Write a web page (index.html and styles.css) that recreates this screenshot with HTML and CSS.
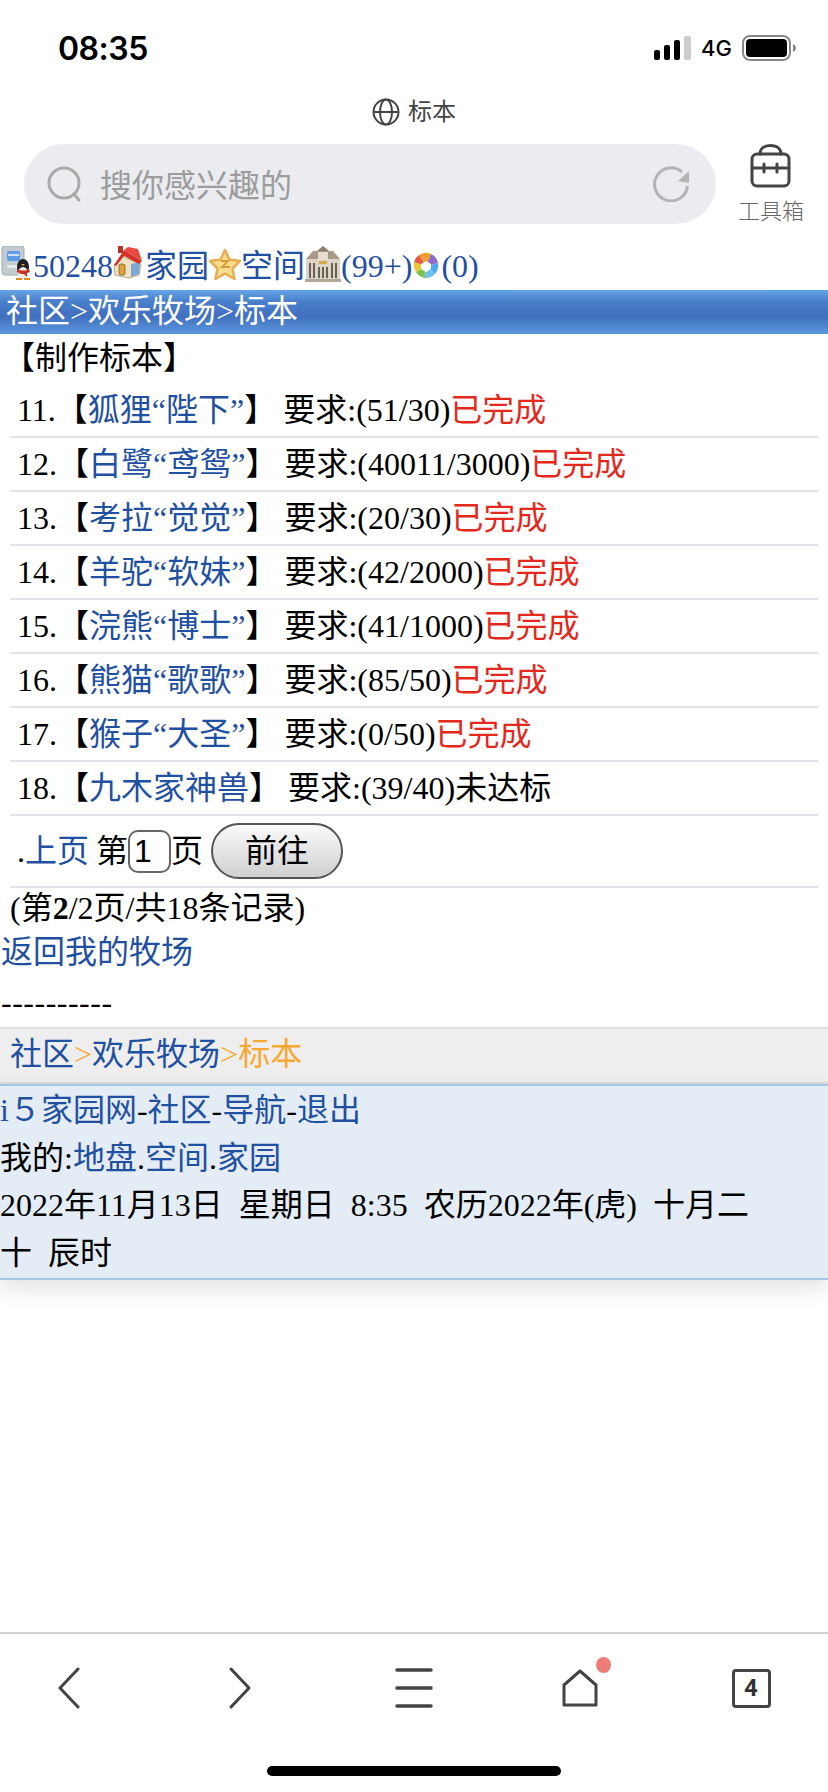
FILE: index.html
```html
<!DOCTYPE html>
<html lang="zh-CN">
<head>
    <meta charset="UTF-8">
    <meta name="viewport" content="width=device-width, initial-scale=1.0">
    <title>标本</title>
    <link rel="stylesheet" href="styles.css">
</head>
<body>
    <header class="browser-top">
        <div class="status-bar">
            <span class="clock">08:35</span>
            <div class="status-right">
                <svg class="signal" viewBox="0 0 37 24">
                    <rect x="0" y="14" width="6" height="10" rx="2" fill="#000"/>
                    <rect x="10" y="9" width="6" height="15" rx="2" fill="#000"/>
                    <rect x="20" y="4" width="6" height="20" rx="2" fill="#000"/>
                    <rect x="30" y="0" width="7" height="24" rx="2" fill="#ccc"/>
                </svg>
                <span class="network">4G</span>
                <svg class="battery" viewBox="0 0 54 26">
                    <rect x="1" y="1" width="47" height="24" rx="7" fill="none" stroke="#888" stroke-width="2"/>
                    <rect x="4" y="4" width="41" height="18" rx="4" fill="#000"/>
                    <path d="M51 9c2 1 3 2.500 3 4s-1 3-3 4z" fill="#888"/>
                </svg>
            </div>
        </div>
        <div class="page-title">
            <svg class="globe" viewBox="0 0 28 28" fill="none" stroke="#444" stroke-width="2">
                <circle cx="14" cy="14" r="12.500"/>
                <ellipse cx="14" cy="14" rx="6" ry="12.500"/>
                <path d="M1.500 14h25"/>
            </svg>
            <span>标本</span>
        </div>
        <div class="search-row">
            <div class="search-box">
                <svg class="search-icon" viewBox="0 0 36 36" fill="none" stroke="#aaa" stroke-width="3" stroke-linecap="round">
                    <circle cx="17" cy="17" r="15"/>
                    <path d="M27 28l5 6"/>
                </svg>
                <span class="search-text">搜你感兴趣的</span>
                <svg class="refresh-icon" viewBox="0 0 36 36" fill="none" stroke="#b4b4b4" stroke-width="3">
                    <path d="M29 6A16.500 16.500 0 1 0 34.500 20"/>
                    <path d="M36 5v12l-11-2z" fill="#b4b4b4" stroke="none"/>
                </svg>
            </div>
            <div class="toolbox">
                <svg class="toolbox-icon" viewBox="0 0 44 44" fill="none" stroke="#444" stroke-width="3" stroke-linecap="round" stroke-linejoin="round">
                    <rect x="3" y="10" width="37" height="32" rx="5"/>
                    <path d="M11 10c0-5 4-8.500 10.500-8.500S32 5 32 10"/>
                    <path d="M3 24h37M15 20v8M28 20v8"/>
                </svg>
                <span>工具箱</span>
            </div>
        </div>
    </header>

    <main>
        <div class="top-links">
            <svg class="pic pic-qq" viewBox="0 0 32 34">
                <rect x="1" y="0" width="22" height="29" rx="3" fill="#c2cbd2" stroke="#a0abb4"/>
                <rect x="6" y="5" width="13" height="10" rx="1" fill="#5f9ce6"/>
                <rect x="7" y="8" width="11" height="2" fill="#cfe2fa"/>
                <rect x="6" y="19" width="10" height="3" fill="#e4eaef"/>
                <ellipse cx="22" cy="21" rx="6" ry="8" fill="#1e1e1e"/>
                <ellipse cx="22" cy="27" rx="5" ry="6" fill="#f2ece2"/>
                <path d="M16 23c3 2 9 2 12 0l1 3-3 1v4l-3-3h-3l-4-2z" fill="#cf2f22"/>
                <path d="M20 18h4l-2 2z" fill="#eba31e"/>
                <path d="M15 33h6M23 33h6" stroke="#e08c1c" stroke-width="2"/>
            </svg><a href="#">50248</a><svg class="pic pic-house" viewBox="0 0 32 34">
                <path d="M1 19l9-8 18 7-2 11-10 3-14-3z" fill="#efe3c3" stroke="#a89768" stroke-width=".8"/>
                <path d="M18 18l9-2-1 12-8 3z" fill="#7ba8d4"/>
                <path d="M1 19L11 4l18 11-3 3-15-8-8 10z" fill="#d6302a"/>
                <path d="M11 4l18 11 -4-12L15 1z" fill="#e84a40"/>
                <rect x="5" y="0" width="5" height="7" fill="#b93026"/>
                <rect x="6" y="18" width="6" height="11" rx="2" fill="#e4a23c" stroke="#7b5d28" stroke-width=".8"/>
            </svg><a href="#">家园</a><svg class="pic pic-star" viewBox="0 0 32 32">
                <path d="M16 2l4.500 9.500L31 13l-7.500 7.500L25.500 31 16 25.500 6.500 31l2-10.500L1 13l10.500-1.500z" fill="#f9dd8c" stroke="#e8ac52" stroke-width="2.500" stroke-linejoin="round"/>
                <path d="M12 13h7l-6 6h8" fill="none" stroke="#d89a38" stroke-width="1.800"/>
            </svg><a href="#">空间</a><svg class="pic pic-bank" viewBox="0 0 36 36">
                <path d="M18 0l6 5H12z" fill="#8d7f6e"/>
                <path d="M8 5h20l7 8H1z" fill="#a89a86"/>
                <rect x="1" y="13" width="34" height="21" fill="#dcd4c4"/>
                <rect x="13" y="6" width="10" height="8" fill="#e6dfd0"/>
                <path d="M5 17v15M9 17v15M14 21v11M18 21v11M22 21v11M27 17v15M31 17v15" stroke="#6a6259" stroke-width="2"/>
                <rect x="0" y="33" width="36" height="3" fill="#b3a896"/>
                <rect x="14" y="15" width="8" height="3" fill="#d6ad4e"/>
            </svg><a href="#">(99+)</a><svg class="pic pic-photo" viewBox="0 0 26 26">
                <path d="M13 13L6 2a12.500 12.500 0 0 1 12-1z" fill="#f0a030"/>
                <path d="M13 13l5-12a12.500 12.500 0 0 1 7 9z" fill="#8e6cc8"/>
                <path d="M13 13l12-3a12.500 12.500 0 0 1-3 11z" fill="#4aa8ec"/>
                <path d="M13 13l9 8a12.500 12.500 0 0 1-10 4z" fill="#6cc0f0"/>
                <path d="M13 13l-1 12a12.500 12.500 0 0 1-9-6z" fill="#7cc050"/>
                <path d="M13 13L3 19A12.500 12.500 0 0 1 1 9z" fill="#e8c838"/>
                <path d="M13 13L1 9a12.500 12.500 0 0 1 5-7z" fill="#e85848"/>
                <path d="M13 8l5 3v5l-5 3-5-3v-5z" fill="#fff"/>
            </svg><a href="#">(0)</a>
        </div>

        <div class="title-bar">社区&gt;欢乐牧场&gt;标本</div>
        <div class="section-head">【制作标本】</div>

        <div class="list">
            <div class="list-row">11.【<a href="#">狐狸“陛下”</a>】 要求:(51/30)<span class="done">已完成</span></div>
            <div class="list-row">12.【<a href="#">白鹭“鸢鸳”</a>】 要求:(40011/3000)<span class="done">已完成</span></div>
            <div class="list-row">13.【<a href="#">考拉“觉觉”</a>】 要求:(20/30)<span class="done">已完成</span></div>
            <div class="list-row">14.【<a href="#">羊驼“软妹”</a>】 要求:(42/2000)<span class="done">已完成</span></div>
            <div class="list-row">15.【<a href="#">浣熊“博士”</a>】 要求:(41/1000)<span class="done">已完成</span></div>
            <div class="list-row">16.【<a href="#">熊猫“歌歌”</a>】 要求:(85/50)<span class="done">已完成</span></div>
            <div class="list-row">17.【<a href="#">猴子“大圣”</a>】 要求:(0/50)<span class="done">已完成</span></div>
            <div class="list-row">18.【<a href="#">九木家神兽</a>】 要求:(39/40)未达标</div>
            <form class="list-row pager">
                <span>.<a href="#">上页</a> 第</span><input class="page-input" type="text" value="1"><span>页</span>
                <button class="go-btn" type="button">前往</button>
            </form>
        </div>

        <div class="page-info">(第<b>2</b>/2页/共18条记录)</div>
        <div class="back-link"><a href="#">返回我的牧场</a></div>
        <div class="dashes">----------</div>

        <div class="crumbs"><a href="#">社区</a><i>&gt;</i><a href="#">欢乐牧场</a><i>&gt;</i><i>标本</i></div>
        <div class="site-foot">
            <div><a href="#">i５家园网</a>-<a href="#">社区</a>-<a href="#">导航</a>-<a href="#">退出</a></div>
            <div>我的:<a href="#">地盘</a>.<a href="#">空间</a>.<a href="#">家园</a></div>
            <div>2022年11月13日&nbsp;&nbsp;星期日&nbsp;&nbsp;8:35&nbsp;&nbsp;农历2022年(虎)&nbsp;&nbsp;十月二<br>十&nbsp;&nbsp;辰时</div>
        </div>
    </main>

    <footer class="browser-bottom">
        <nav class="tool-bar">
            <svg class="tool tool-chevron" viewBox="0 0 24 42" fill="none" stroke="#444" stroke-width="3" stroke-linecap="round" stroke-linejoin="round">
                <path d="M21 2L3 21l18 19"/>
            </svg>
            <svg class="tool tool-chevron" viewBox="0 0 24 42" fill="none" stroke="#444" stroke-width="3" stroke-linecap="round" stroke-linejoin="round">
                <path d="M3 2l18 19L3 40"/>
            </svg>
            <svg class="tool tool-menu" viewBox="0 0 38 40" fill="none" stroke="#444" stroke-width="3.500" stroke-linecap="round">
                <path d="M2 2h34M2 20h34M2 38h34"/>
            </svg>
            <div class="home-wrap">
                <svg class="tool tool-home" viewBox="0 0 36 38" fill="none" stroke="#444" stroke-width="3" stroke-linejoin="round">
                    <path d="M18 2L2 16v20h32V16z"/>
                </svg>
                <span class="home-dot"></span>
            </div>
            <div class="tabs-count">4</div>
        </nav>
        <div class="home-bar"></div>
    </footer>
</body>
</html>
```

FILE: styles.css
```css
body {
    margin: 0;
    width: 828px;
    height: 1792px;
    display: flex;
    flex-direction: column;
    overflow: hidden;
    background-color: #fff;
    color: #000;
    font-family: "Liberation Serif", "Noto Sans CJK SC", serif;
    font-size: 32px;
}
a {
    color: #1f50a2;
    text-decoration: none;
}

/* browser chrome, top */
.browser-top {
    height: 242px;
    font-family: "Noto Sans CJK SC", sans-serif;
}
.status-bar {
    height: 96px;
    padding: 0 32px 0 58px;
    display: flex;
    justify-content: space-between;
    align-items: center;
}
.clock {
    font-family: Inter, sans-serif;
    font-size: 32px;
    font-weight: 600;
    letter-spacing: -0.500px;
}
.status-right {
    display: flex;
    align-items: center;
}
.signal {
    width: 37px;
    height: 24px;
}
.network {
    margin: 0 10px;
    font-family: Inter, sans-serif;
    font-size: 22px;
    font-weight: 500;
}
.battery {
    width: 54px;
    height: 26px;
}
.page-title {
    height: 28px;
    padding-bottom: 4px;
    display: flex;
    justify-content: center;
    align-items: center;
    gap: 8px;
    color: #444;
    font-size: 24px;
    font-weight: 400;
}
.page-title span {
    line-height: 24px;
    margin-top: 0;
}
.globe {
    width: 28px;
    height: 28px;
    margin-top: 4px;
}
.search-row {
    margin-top: 16px;
    padding: 0 24px;
    display: flex;
}
.search-box {
    width: 692px;
    height: 80px;
    padding: 0 23px;
    box-sizing: border-box;
    display: flex;
    align-items: center;
    border-radius: 40px;
    background-color: #ebecf0;
}
.search-icon {
    width: 36px;
    height: 36px;
}
.search-text {
    margin: -3px 0 0 17px;
    flex: 1;
    color: #9c9c9c;
    font-size: 32px;
    font-weight: 400;
}
.refresh-icon {
    width: 36px;
    height: 36px;
    margin-right: 4px;
}
.toolbox {
    margin: 0 0 0 22px;
    width: 66px;
    display: flex;
    flex-direction: column;
    align-items: center;
    color: #666;
    font-size: 22px;
    line-height: 30px;
    font-weight: 300;
}
.toolbox-icon {
    width: 44px;
    height: 44px;
    margin-bottom: 6px;
}

/* page content */
.top-links {
    height: 48px;
    display: flex;
    align-items: center;
    line-height: 46px;
}
.pic {
    flex: none;
    filter: blur(0.4px);
}
.pic-qq {
    width: 32px;
    height: 34px;
    margin: -6px 0 0 1px;
}
.pic-house {
    width: 32px;
    height: 34px;
    margin-top: -6px;
}
.pic-star {
    width: 32px;
    height: 32px;
    margin-top: -4px;
}
.pic-bank {
    width: 36px;
    height: 36px;
    margin-top: -4px;
}
.pic-photo {
    width: 26px;
    height: 26px;
    margin: 0 2px 0 1px;
}
.title-bar {
    height: 44px;
    padding-left: 6px;
    line-height: 42px;
    color: #fff;
    background: linear-gradient(#65a5e6, #4a7fcc 25%, #4070bf 60%, #5c97de);
}
.section-head {
    height: 49px;
    padding-left: 3px;
    line-height: 48px;
}
.list {
    margin: 1px 10px 0;
}
.list-row {
    height: 52px;
    padding-left: 7px;
    line-height: 52px;
    word-spacing: -1px;
    border-bottom: 2px solid #e2e2e8;
}
.done {
    color: #e5281c;
}
.pager {
    height: 70px;
    display: flex;
    align-items: center;
    margin: 0;
}
.page-input {
    width: 43px;
    height: 43px;
    padding: 0 4px;
    box-sizing: border-box;
    border: 2px solid #666;
    border-radius: 10px;
    font-family: "Liberation Sans", sans-serif;
    font-size: 32px;
    color: #000;
    background-color: #fff;
}
.go-btn {
    width: 132px;
    height: 56px;
    margin-left: 8px;
    padding: 0;
    border: 2px solid #555;
    border-radius: 28px;
    background: linear-gradient(#fafafa, #d0d0d0);
    font-family: "Liberation Serif", "Noto Sans CJK SC", serif;
    font-size: 32px;
    line-height: 48px;
    color: #000;
}
.page-info {
    height: 41px;
    padding-left: 10px;
    line-height: 40px;
}
.back-link {
    height: 46px;
    padding-left: 1px;
    line-height: 46px;
}
.dashes {
    height: 52px;
    padding-left: 1px;
    letter-spacing: 0.500px;
    line-height: 54px;
}
.crumbs {
    height: 53px;
    padding-left: 10px;
    line-height: 50px;
    border-top: 2px solid #ddd;
    border-bottom: 2px solid #ddd;
    background-color: #eee;
}
.crumbs i {
    font-style: normal;
    color: #f7a934;
}
.site-foot {
    padding-top: 1px;
    line-height: 47.500px;
    height: 191px;
    border-top: 2px solid #a8c6e8;
    border-bottom: 2px solid #a8c6e8;
    background-color: #e4ecf6;
    box-shadow: 0 8px 22px rgba(0, 0, 0, 0.12);
}

/* browser chrome, bottom */
.browser-bottom {
    margin-top: auto;
    height: 160px;
    box-sizing: border-box;
    border-top: 2px solid #d2d2d2;
    background-color: #fff;
}
.tool-bar {
    height: 108px;
    display: grid;
    grid-template-columns: 138px 204px 144px 188px 154px;
    align-items: center;
    justify-items: center;
}
.tool-chevron {
    width: 24px;
    height: 42px;
}
.tool-menu {
    width: 38px;
    height: 40px;
}
.home-wrap {
    position: relative;
    width: 36px;
    height: 38px;
}
.tool-home {
    display: block;
    width: 36px;
    height: 38px;
}
.home-dot {
    position: absolute;
    left: 34px;
    top: -12px;
    width: 15px;
    height: 16px;
    border-radius: 50%;
    background-color: #ee7d78;
}
.tabs-count {
    width: 39px;
    height: 39px;
    box-sizing: border-box;
    border: 3px solid #444;
    border-radius: 4px;
    text-align: center;
    font-family: "Roboto", sans-serif;
    font-size: 24px;
    font-weight: 700;
    line-height: 33px;
    color: #333;
}
.home-bar {
    width: 294px;
    height: 10px;
    margin: 24px auto 0;
    border-radius: 5px;
    background-color: #000;
}
```
